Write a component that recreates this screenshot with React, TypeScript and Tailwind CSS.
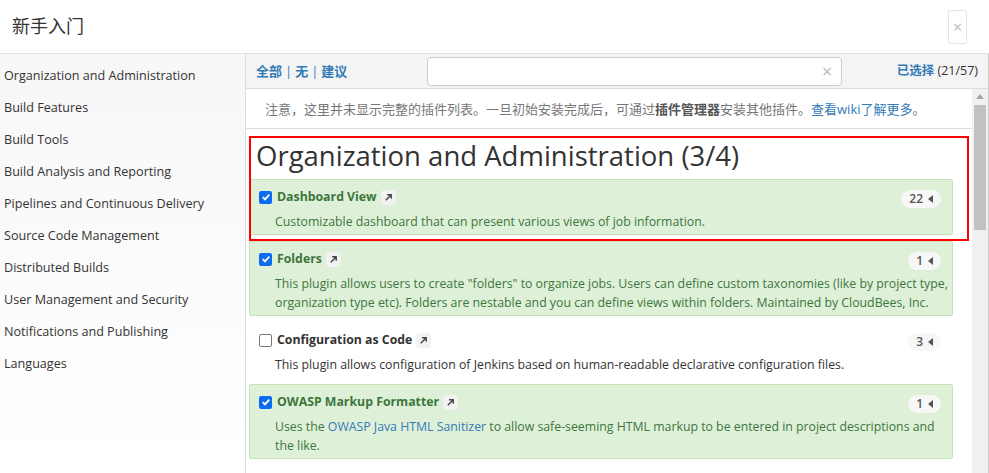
import React from 'react'

const categories = [
  'Organization and Administration',
  'Build Features',
  'Build Tools',
  'Build Analysis and Reporting',
  'Pipelines and Continuous Delivery',
  'Source Code Management',
  'Distributed Builds',
  'User Management and Security',
  'Notifications and Publishing',
  'Languages',
]

const font = "font-['Open_Sans','Noto_Sans_CJK_SC',sans-serif]"

function ExtIcon() {
  return (
    <span className="ml-1 inline-flex h-[15px] w-[15px] items-center justify-center rounded-sm bg-[#f2f2f2]">
      <svg width="9" height="9" viewBox="0 0 10 10">
        <path d="M2 8 L8 2 M3.5 2 H8 V6.5" stroke="#444" strokeWidth="1.6" fill="none" />
      </svg>
    </span>
  )
}

function Badge({ n }: { n: string }) {
  return (
    <span className="inline-flex h-[18px] items-center gap-[5px] rounded-full bg-[#f7f7f7] px-[8px] text-[12px] font-semibold text-[#555]">
      {n}
      <svg width="5" height="8" viewBox="0 0 5 8">
        <path d="M5 0 L0 4 L5 8 Z" fill="#555" />
      </svg>
    </span>
  )
}

function Check({ on }: { on: boolean }) {
  return on ? (
    <span className="flex h-[13px] w-[13px] items-center justify-center rounded-[2px] bg-[#0b6cf2]">
      <svg width="10" height="10" viewBox="0 0 10 10">
        <path d="M1.8 5.2 L4 7.4 L8.3 2.6" stroke="white" strokeWidth="1.8" fill="none" />
      </svg>
    </span>
  ) : (
    <span className="h-[13px] w-[13px] rounded-[2px] border border-[#767676] bg-white" />
  )
}

function Plugin({
  title,
  count,
  on,
  children,
}: {
  title: string
  count: string
  on: boolean
  children: React.ReactNode
}) {
  return (
    <div
      className={
        on
          ? 'mb-[6px] rounded-[2px] border border-[#c6e3b5] bg-[#dff0d8] pb-[3px] pl-[9px] pr-[11px] pt-[7px] text-[#3c763d]'
          : 'mb-[6px] border border-transparent pb-[3px] pl-[9px] pr-[11px] pt-[7px] text-[#333]'
      }
    >
      <div className="flex h-[20px] items-center">
        <Check on={on} />
        <span className="ml-[5px] text-[12.3px] font-bold">{title}</span>
        <ExtIcon />
        <span className="ml-auto">
          <Badge n={count} />
        </span>
      </div>
      <div className="mr-[-10px] mt-[5px] pl-[16px] text-[12.3px] leading-[19px]">{children}</div>
    </div>
  )
}

export default function App() {
  return (
    <div className={`relative h-[473px] w-[989px] overflow-hidden bg-white ${font}`}>
      <div className="flex h-[54px] items-center justify-between border-b border-[#e0e0e0] pl-[12px] pr-[22px]">
        <h1 className="text-[18px] font-normal text-[#333]">新手入门</h1>
        <button className="flex h-[34px] w-[19px] items-center justify-center rounded-[2px] border border-[#e4e4e4] text-[16px] text-[#bbb]">
          ×
        </button>
      </div>

      <div className="flex h-[419px] border-r border-[#ccc]">
        <div className="w-[246px] shrink-0 border-r border-[#ddd] bg-gradient-to-b from-[#f7f7f7] to-white pt-[6px]">
          {categories.map((c) => (
            <div key={c} className="flex h-[32px] items-center pl-[4px] text-[12.6px] text-[#333]">
              {c}
            </div>
          ))}
        </div>

        <div className="flex min-w-0 flex-1 flex-col">
          <div className="flex h-[35px] shrink-0 items-center border-b border-[#ddd] bg-[#f4f4f4] pl-[10px] pr-[10px]">
            <div className="mt-[2px] flex items-center gap-[3px] text-[13px] font-bold text-[#337ab7]">
              <span>全部</span>
              <span className="font-normal">|</span>
              <span>无</span>
              <span className="font-normal">|</span>
              <span>建议</span>
            </div>
            <div className="ml-[80px] flex h-[29px] w-[415px] items-center justify-end rounded-[4px] border border-[#ccc] bg-white pr-[9px] text-[18px] text-[#bbb]">
              ×
            </div>
            <div className="ml-auto text-[12.5px] text-[#333]">
              <span className="font-bold text-[#337ab7]">已选择</span> (21/57)
            </div>
          </div>

          <div className="flex min-h-0 flex-1">
            <div className="min-w-0 flex-1 overflow-hidden">
              <div className="flex h-[40px] items-center border-b border-[#ddd] pl-[19px] pt-[2px] text-[13px] text-[#777]">
                注意，这里并未显示完整的插件列表。一旦初始安装完成后，可通过
                <span className="font-bold text-[#555]">插件管理器</span>
                安装其他插件。
                <span className="text-[#337ab7]">查看wiki了解更多</span>。
              </div>

              <div className="pl-[3px] pr-[19px] pt-[8px]">
                <h2 className="mb-[4px] pl-[7px] text-[27.5px] leading-[38px] text-[#333]">
                  Organization and Administration (3/4)
                </h2>
                <Plugin title="Dashboard View" count="22" on>
                  Customizable dashboard that can present various views of job information.
                </Plugin>
                <Plugin title="Folders" count="1" on>
                  This plugin allows users to create "folders" to organize jobs. Users can define custom taxonomies (like by project type, organization type etc). Folders are nestable and you can define views within folders. Maintained by CloudBees, Inc.
                </Plugin>
                <Plugin title="Configuration as Code" count="3" on={false}>
                  This plugin allows configuration of Jenkins based on human-readable declarative configuration files.
                </Plugin>
                <Plugin title="OWASP Markup Formatter" count="1" on>
                  Uses the <span className="text-[#337ab7]">OWASP Java HTML Sanitizer</span> to allow safe-seeming HTML markup to be entered in project descriptions and the like.
                </Plugin>
              </div>
            </div>

            <div className="flex w-[16px] shrink-0 flex-col items-center bg-[#f1f1f1]">
              <svg className="mt-[5px]" width="8" height="5" viewBox="0 0 8 5">
                <path d="M0 5 L4 0 L8 5 Z" fill="#a3a3a3" />
              </svg>
              <div className="mt-[6px] h-[125px] w-[12px] bg-[#c1c1c1]" />
            </div>
          </div>
        </div>
      </div>

      <div className="pointer-events-none absolute left-[249px] top-[136px] h-[105px] w-[720px] border-2 border-[#f00]" />
    </div>
  )
}
